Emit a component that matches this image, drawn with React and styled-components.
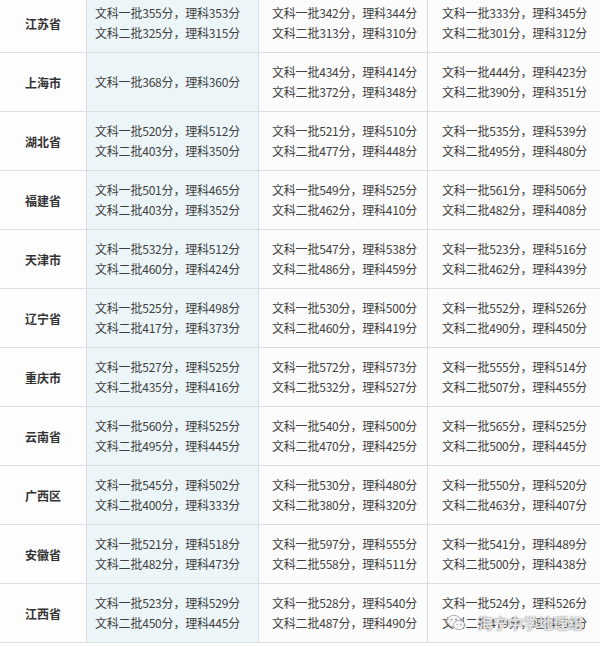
import React from 'react';
import styled, { createGlobalStyle } from 'styled-components';

const ROWS = [
    { name: '江苏省', cells: [['文科一批355分，理科353分', '文科二批325分，理科315分'], ['文科一批342分，理科344分', '文科二批313分，理科310分'], ['文科一批333分，理科345分', '文科二批301分，理科312分']] },
    { name: '上海市', cells: [['文科一批368分，理科360分'], ['文科一批434分，理科414分', '文科二批372分，理科348分'], ['文科一批444分，理科423分', '文科二批390分，理科351分']] },
    { name: '湖北省', cells: [['文科一批520分，理科512分', '文科二批403分，理科350分'], ['文科一批521分，理科510分', '文科二批477分，理科448分'], ['文科一批535分，理科539分', '文科二批495分，理科480分']] },
    { name: '福建省', cells: [['文科一批501分，理科465分', '文科二批403分，理科352分'], ['文科一批549分，理科525分', '文科二批462分，理科410分'], ['文科一批561分，理科506分', '文科二批482分，理科408分']] },
    { name: '天津市', cells: [['文科一批532分，理科512分', '文科二批460分，理科424分'], ['文科一批547分，理科538分', '文科二批486分，理科459分'], ['文科一批523分，理科516分', '文科二批462分，理科439分']] },
    { name: '辽宁省', cells: [['文科一批525分，理科498分', '文科二批417分，理科373分'], ['文科一批530分，理科500分', '文科二批460分，理科419分'], ['文科一批552分，理科526分', '文科二批490分，理科450分']] },
    { name: '重庆市', cells: [['文科一批527分，理科525分', '文科二批435分，理科416分'], ['文科一批572分，理科573分', '文科二批532分，理科527分'], ['文科一批555分，理科514分', '文科二批507分，理科455分']] },
    { name: '云南省', cells: [['文科一批560分，理科525分', '文科二批495分，理科445分'], ['文科一批540分，理科500分', '文科二批470分，理科425分'], ['文科一批565分，理科525分', '文科二批500分，理科445分']] },
    { name: '广西区', cells: [['文科一批545分，理科502分', '文科二批400分，理科333分'], ['文科一批530分，理科480分', '文科二批380分，理科320分'], ['文科一批550分，理科520分', '文科二批463分，理科407分']] },
    { name: '安徽省', cells: [['文科一批521分，理科518分', '文科二批482分，理科473分'], ['文科一批597分，理科555分', '文科二批558分，理科511分'], ['文科一批541分，理科489分', '文科二批500分，理科438分']] },
    { name: '江西省', cells: [['文科一批523分，理科529分', '文科二批450分，理科445分'], ['文科一批528分，理科540分', '文科二批487分，理科490分'], ['文科一批524分，理科526分', '文科二批479分，理科459分']] },
];

// column widths and text offsets measured from the screenshot
const COLS = [
    { width: 172, pad: 8, bg: '#ecf6f9' },
    { width: 169, pad: 13, bg: '#fcfcfc' },
    { width: 172, pad: 14, bg: '#fcfcfc' },
];

const GlobalStyle = createGlobalStyle`
    html, body {
        margin: 0;
        padding: 0;
        background: #ffffff;
        overflow: hidden;
    }
`;

const Page = styled.div`
    position: relative;
    width: 600px;
    height: 646px;
    overflow: hidden;
    font-family: "Noto Sans CJK SC", "Noto Sans", sans-serif;
`;

const Table = styled.div`
    margin-top: -6px;
    display: flex;
    flex-direction: column;
`;

const Row = styled.div`
    display: flex;
    height: 58px;
    border-bottom: 1px solid #dcdfe1;
`;

const NameCell = styled.div`
    width: 86px;
    flex-shrink: 0;
    display: flex;
    align-items: center;
    justify-content: center;
    background: #fdfdfd;
    border-right: 1px solid #dcdfe1;
    color: #333333;
    font-size: 12px;
    font-weight: 700;
`;

const DataCell = styled.div`
    width: ${({ $width }) => $width}px;
    flex-shrink: 0;
    display: flex;
    flex-direction: column;
    justify-content: center;
    padding-left: ${({ $pad }) => $pad}px;
    box-sizing: border-box;
    background: ${({ $bg }) => $bg};
    border-right: 1px solid #dcdfe1;
    &:last-child {
        border-right: none;
    }
`;

const Line = styled.div`
    font-size: 12px;
    line-height: 20px;
    color: #404040;
    white-space: nowrap;
    letter-spacing: -0.2px;
`;

const Watermark = styled.div`
    position: absolute;
    left: 446px;
    top: 612px;
    display: flex;
    align-items: center;
    gap: 12px;
    color: rgba(255, 255, 255, 0.8);
    font-size: 15px;
    font-weight: 500;
    text-shadow: 0 0 1px #8a8a8a, 0 0 2px #a0a0a0;
    white-space: nowrap;
`;

const WechatIcon = () => (
    <svg width="20" height="18" viewBox="0 0 20 18">
        <g fill="rgba(255,255,255,0.8)" stroke="#9a9a9a" strokeWidth="0.8">
            <ellipse cx="8" cy="7" rx="7" ry="5.6" />
            <ellipse cx="13" cy="11" rx="5.8" ry="4.6" />
        </g>
        <g fill="#9a9a9a">
            <circle cx="5.5" cy="5.6" r="0.9" />
            <circle cx="10" cy="5.6" r="0.9" />
            <circle cx="11.2" cy="10.4" r="0.7" />
            <circle cx="14.8" cy="10.4" r="0.7" />
        </g>
    </svg>
);

const App = () => (
    <Page>
        <GlobalStyle />
        <Table>
            {ROWS.map((row) => (
                <Row key={row.name}>
                    <NameCell>{row.name}</NameCell>
                    {row.cells.map((lines, i) => (
                        <DataCell key={i} $width={COLS[i].width} $pad={COLS[i].pad} $bg={COLS[i].bg}>
                            {lines.map((text) => (
                                <Line key={text}>{text}</Line>
                            ))}
                        </DataCell>
                    ))}
                </Row>
            ))}
        </Table>
        <Watermark>
            <WechatIcon />
            <span>海宁中学地理组</span>
        </Watermark>
    </Page>
);

export default App;
